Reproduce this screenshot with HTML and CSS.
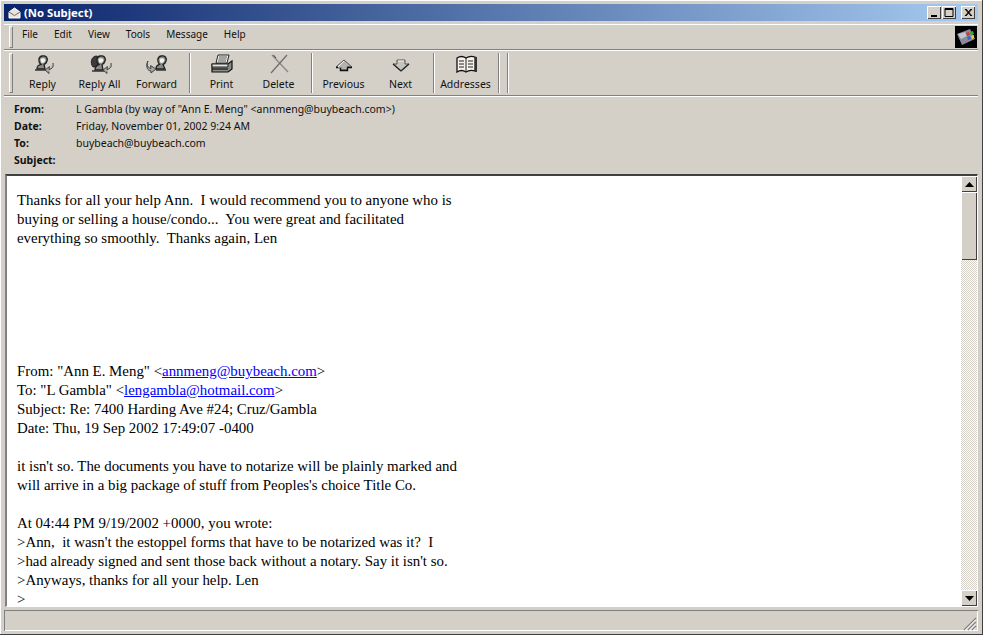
FILE: index.html
```html
<!DOCTYPE html>
<html lang="en">
<head>
    <meta charset="UTF-8">
    <meta name="viewport" content="width=device-width, initial-scale=1.0">
    <title>(No Subject)</title>
    <link rel="stylesheet" href="styles.css">
</head>
<body>
    <div class="window">
        <div class="titlebar">
            <svg class="title-icon" width="13" height="12" viewBox="0 0 13 12">
                <path d="M1 5 L6.5 1 L12 5 V11 H1 Z" fill="#e8e4d8" stroke="#fff" stroke-width="1"/>
                <path d="M1 5 L6.5 8.5 L12 5" fill="none" stroke="#6a6a6a" stroke-width="1"/>
            </svg>
            <span class="title-text">(No Subject)</span>
            <div class="caption-btns">
                <div class="caption-btn"><svg width="14" height="13" viewBox="0 0 14 13"><rect x="4" y="9" width="6" height="2" fill="#000"/></svg></div>
                <div class="caption-btn"><svg width="14" height="13" viewBox="0 0 14 13"><path d="M3 2.5 H11 V10.5 H3 Z M3 3.5 H11" fill="none" stroke="#000"/></svg></div>
                <div class="caption-btn close"><svg width="14" height="13" viewBox="0 0 14 13"><path d="M4 3 L10 10 M5 3 L11 10 M10 3 L4 10 M11 3 L5 10" stroke="#000" stroke-width="1"/></svg></div>
            </div>
        </div>

        <div class="menubar">
            <div class="grip"></div>
            <div class="menu-items">
                <span class="menu-item">File</span>
                <span class="menu-item">Edit</span>
                <span class="menu-item">View</span>
                <span class="menu-item">Tools</span>
                <span class="menu-item">Message</span>
                <span class="menu-item">Help</span>
            </div>
            <div class="throbber">
                <svg width="22" height="22" viewBox="0 0 22 22">
                    <rect width="22" height="22" fill="#000"/>
                    <path d="M2 8 L15 3 L20 13 L7 19 Z" fill="#8a8a9a"/>
                    <path d="M3 8 L10 6 L12 10 L6 13 Z" fill="#c4c4d0"/>
                    <path d="M11 7 L14 6 L15 9 L12 10 Z" fill="#d33"/>
                    <path d="M15 6 L18 5 L19 8 L16 9 Z" fill="#3a3"/>
                    <path d="M12 11 L15 10 L16 13 L13 14 Z" fill="#36c"/>
                    <path d="M16 10 L19 9 L19 12 L17 13 Z" fill="#ec3"/>
                </svg>
            </div>
        </div>

        <div class="toolbar">
            <div class="grip tall"></div>
            <div class="tool">
                <svg class="tool-icon" width="24" height="20" viewBox="0 0 24 20">
                    <path d="M6 15 C6 11 8 11 10 10.5 C7 8 7 3 11 2 C15 1 17 4 16 7 C15.5 9 14 10 13 10.5 L14 15 Z" fill="#8c8c88" stroke="#222" stroke-width="1.3"/>
                    <path d="M9.5 5 C11 3.5 14 4 14.5 6 C14 9 11 10 10 8 Z" fill="#f2f2ee"/>
                    <path d="M4 16 H16" stroke="#333" stroke-width="1.5"/>
                    <path d="M22 9 C23 13 21 15 18 15.5 L18.5 12.5 L14 16 L18 19.5 V17.5" fill="#a8a8a4" stroke="#444"/>
                </svg>
                <span class="tool-label">Reply</span>
            </div>
            <div class="tool">
                <svg class="tool-icon" width="24" height="20" viewBox="0 0 24 20">
                    <path d="M5 13 C2 9 3 3 8 2 L12 3 L10 12 Z" fill="#3c3c3a" stroke="#222"/>
                    <path d="M7 16 C7 12 9 11 11 10.5 C8 8 8 3 12 2 C16 1 18 4 17 7 C16.5 9 15 10 14 10.5 L15 16 Z" fill="#8c8c88" stroke="#222" stroke-width="1.3"/>
                    <path d="M10.5 5 C12 3.5 15 4 15.5 6 C15 9 12 10 11 8 Z" fill="#f2f2ee"/>
                    <path d="M4 17 H17" stroke="#333" stroke-width="1.5"/>
                    <path d="M23 9 C24 13 22 15 19 15.5 L19.5 12.5 L15 16 L19 19.5 V17.5" fill="#a8a8a4" stroke="#444"/>
                </svg>
                <span class="tool-label">Reply All</span>
            </div>
            <div class="tool">
                <svg class="tool-icon" width="24" height="20" viewBox="0 0 24 20">
                    <path d="M11 15 C11 11 13 11 14.5 10.5 C12 8 12 3 16 2 C20 1 22 4 21 7 C20.5 9 19 10 18 10.5 L20 15 Z" fill="#8c8c88" stroke="#222" stroke-width="1.3"/>
                    <path d="M14.5 5 C16 3.5 19 4 19.5 6 C19 9 16 10 15 8 Z" fill="#f2f2ee"/>
                    <path d="M11 16 H21" stroke="#333" stroke-width="1.5"/>
                    <path d="M3 7 C1 11 3 14 6 14.5 L5.5 11.5 L11 15 L6 19 V17 C3 17 0 13 3 7 Z" fill="#a8a8a4" stroke="#444"/>
                </svg>
                <span class="tool-label">Forward</span>
            </div>
            <div class="sep"></div>
            <div class="tool">
                <svg class="tool-icon" width="24" height="20" viewBox="0 0 24 20">
                    <path d="M8 1 H19 L17 9 H6 Z" fill="#f4f4f0" stroke="#222"/>
                    <path d="M9 3 H17 M8.5 5 H16.5 M8 7 H16" stroke="#555"/>
                    <path d="M2 10 H18 L22 7 V15 L18 18 H2 Z" fill="#8c8c88" stroke="#111" stroke-width="1.2"/>
                    <path d="M2 10 H18 V13 H2 Z" fill="#e4e4e0" stroke="#222"/>
                    <path d="M2 15 H18" stroke="#111" stroke-width="1.2"/>
                </svg>
                <span class="tool-label">Print</span>
            </div>
            <div class="tool">
                <svg class="tool-icon" width="24" height="20" viewBox="0 0 24 20">
                    <path d="M5 1 L21 18" stroke="#8a8a86" stroke-width="1.4"/>
                    <path d="M6.5 1 L9 4" stroke="#444" stroke-width="1"/>
                    <path d="M20 1 L4 19" stroke="#6c6c68" stroke-width="1.2"/>
                </svg>
                <span class="tool-label">Delete</span>
            </div>
            <div class="sep"></div>
            <div class="tool">
                <svg class="tool-icon" width="24" height="20" viewBox="0 0 24 20">
                    <path d="M12 6 L20 13 H15.5 V16 H8.5 V13 H4 Z" fill="#b4b4ae" stroke="#555"/>
                    <path d="M4 13.5 H8.5 V16.5 H15.5 V13.5 H20" fill="none" stroke="#111" stroke-width="1.4"/>
                    <path d="M12 7 L6 13 H9" fill="none" stroke="#f4f4f0"/>
                </svg>
                <span class="tool-label">Previous</span>
            </div>
            <div class="tool">
                <svg class="tool-icon" width="24" height="20" viewBox="0 0 24 20">
                    <path d="M12 17 L20 10 H16 V6 H8 V10 H4 Z" fill="#c4c4be" stroke="#555"/>
                    <path d="M4 10 L12 17 L20 10" fill="none" stroke="#222" stroke-width="1.3"/>
                    <path d="M9 7 H15" stroke="#f4f4f0"/>
                </svg>
                <span class="tool-label">Next</span>
            </div>
            <div class="sep"></div>
            <div class="tool">
                <svg class="tool-icon" width="24" height="20" viewBox="0 0 24 20">
                    <path d="M3 4 C6 2 9 2 12 4 C15 2 18 2 21 3 V17 C18 16 15 16 12 18 C9 16 6 16 3 18 Z" fill="#f4f2ea" stroke="#111" stroke-width="1.3"/>
                    <path d="M12 4 V18 M5 7 H10 M5 10 H10 M5 13 H10 M14 7 H19 M14 10 H19 M14 13 H19" stroke="#222"/>
                    <rect x="21" y="3" width="2" height="15" fill="#333"/>
                </svg>
                <span class="tool-label">Addresses</span>
            </div>
            <div class="sep"></div>
            <div class="sep last"></div>
        </div>

        <div class="headers">
            <div class="header-row"><span class="header-name">From:</span><span>L Gambla (by way of "Ann E. Meng" &lt;annmeng@buybeach.com&gt;)</span></div>
            <div class="header-row"><span class="header-name">Date:</span><span>Friday, November 01, 2002 9:24 AM</span></div>
            <div class="header-row"><span class="header-name">To:</span><span>buybeach@buybeach.com</span></div>
            <div class="header-row"><span class="header-name">Subject:</span><span></span></div>
        </div>

        <div class="message-frame">
            <div class="message">
                <p>Thanks for all your help Ann.&nbsp; I would recommend you to anyone who is<br>buying or selling a house/condo...&nbsp; You were great and facilitated<br>everything so smoothly.&nbsp; Thanks again, Len</p>
                <p class="quoted">From: "Ann E. Meng" &lt;<a href="#">annmeng@buybeach.com</a>&gt;<br>To: "L Gambla" &lt;<a href="#">lengambla@hotmail.com</a>&gt;<br>Subject: Re: 7400 Harding Ave #24; Cruz/Gambla<br>Date: Thu, 19 Sep 2002 17:49:07 -0400</p>
                <p>it isn't so. The documents you have to notarize will be plainly marked and<br>will arrive in a big package of stuff from Peoples's choice Title Co.</p>
                <p class="last-para">At 04:44 PM 9/19/2002 +0000, you wrote:<br>&gt;Ann,&nbsp; it wasn't the estoppel forms that have to be notarized was it?&nbsp; I<br>&gt;had already signed and sent those back without a notary. Say it isn't so.<br>&gt;Anyways, thanks for all your help. Len<br>&gt;</p>
            </div>
            <div class="scrollbar">
                <div class="scroll-btn"><svg width="9" height="5" viewBox="0 0 9 5"><path d="M4.5 0 L9 5 H0 Z" fill="#000"/></svg></div>
                <div class="scroll-track"><div class="scroll-thumb"></div></div>
                <div class="scroll-btn"><svg width="9" height="5" viewBox="0 0 9 5"><path d="M0 0 H9 L4.5 5 Z" fill="#000"/></svg></div>
            </div>
        </div>

        <div class="statusbar">
            <svg class="size-grip" width="14" height="14" viewBox="0 0 14 14">
                <path d="M13 1 L1 13 M13 5 L5 13 M13 9 L9 13" stroke="#808080" stroke-width="1.2"/>
                <path d="M13 2.5 L2.5 13 M13 6.5 L6.5 13 M13 10.5 L10.5 13" stroke="#fff"/>
            </svg>
        </div>
    </div>
</body>
</html>
```
FILE: styles.css
```css
html, body {
    margin: 0;
    padding: 0;
    height: 100%;
    overflow: hidden;
    background-color: #d4d0c8;
}
.window {
    box-sizing: border-box;
    width: 983px;
    height: 635px;
    padding: 4px 4px 3px 4px;
    display: flex;
    flex-direction: column;
    background-color: #d4d0c8;
    border-right: 1px solid #404040;
    border-bottom: 1px solid #404040;
    box-shadow: inset 1px 1px 0 #fff;
    font-family: "Noto Sans", "Liberation Sans", sans-serif;
    font-size: 10.5px;
    color: #111;
}

/* title bar */
.titlebar {
    height: 17px;
    flex: none;
    display: flex;
    align-items: center;
    padding: 0 3px 0 4px;
    background: linear-gradient(to right, #0a246a, #a6caf0);
}
.title-icon {
    margin-right: 3px;
}
.title-text {
    color: #fff;
    font-family: "Noto Sans", sans-serif;
    font-weight: bold;
    font-size: 11.3px;
}
.caption-btns {
    margin-left: auto;
    display: flex;
}
.caption-btn {
    width: 14px;
    height: 13px;
    margin-left: 1px;
    background-color: #d4d0c8;
    border: 0 solid;
    box-shadow: inset 1px 1px 0 #fff, inset -1px -1px 0 #404040;
}
.caption-btn svg {
    display: block;
}
.caption-btn.close {
    margin-left: 5px;
}

/* bars */
.menubar {
    height: 24px;
    margin-top: 3px;
    flex: none;
    display: flex;
    align-items: center;
    padding-left: 5px;
    border-top: 1px solid #fff;
    border-bottom: 1px solid #808080;
    box-shadow: 0 1px 0 #fff;
}
.grip {
    width: 2px;
    height: 20px;
    flex: none;
    background-color: #d4d0c8;
    border-left: 1px solid #fff;
    border-top: 1px solid #fff;
    border-right: 1px solid #808080;
    border-bottom: 1px solid #808080;
}
.grip.tall {
    height: 38px;
}
.menu-items {
    display: flex;
    margin-left: 1px;
    padding-bottom: 7px;
    font-size: 10px;
}
.menu-item {
    padding: 0 8px;
}
.throbber {
    margin-left: auto;
    margin-right: 1px;
    height: 22px;
}
.throbber svg {
    display: block;
}
.toolbar {
    height: 44px;
    margin-top: 1px;
    flex: none;
    display: flex;
    align-items: center;
    padding-left: 5px;
    border-bottom: 1px solid #808080;
    box-shadow: 0 1px 0 #fff;
}
.toolbar .grip {
    margin-right: 1px;
}
.tool {
    width: 57px;
    height: 44px;
    flex: none;
    display: flex;
    flex-direction: column;
    align-items: center;
}
.tool-icon {
    margin-top: 3px;
}
.tool-label {
    margin-top: 3px;
    white-space: nowrap;
}
.sep {
    width: 0;
    height: 40px;
    flex: none;
    margin: 0 2px 0 4px;
    border-left: 1px solid #808080;
    border-right: 1px solid #fff;
}
.sep.last {
    margin-left: 5px;
}

/* message headers */
.headers {
    flex: none;
    height: 78px;
    padding: 5px 0 0 10px;
    box-sizing: border-box;
}
.header-row {
    height: 17px;
    line-height: 17px;
    display: flex;
}
.header-name {
    width: 62px;
    flex: none;
    font-weight: bold;
}

/* message body */
.message-frame {
    flex: 1;
    min-height: 0;
    margin: 0 0 0 1px;
    display: flex;
    background-color: #fff;
    border-top: 2px solid #404040;
    border-left: 2px solid #808080;
    border-right: 1px solid #fff;
    border-bottom: 1px solid #fff;
}
.message {
    flex: 1;
    min-width: 0;
    padding: 15px 0 0 10px;
    font-family: "Liberation Serif", serif;
    font-size: 14.9px;
    line-height: 19px;
    color: #000;
    white-space: nowrap;
}
.message p {
    margin: 0 0 19px 0;
}
.message p.quoted {
    margin-top: 114px;
}
.message p.last-para {
    margin-bottom: 0;
}
.message a {
    color: #0000ff;
}
.scrollbar {
    width: 16px;
    flex: none;
    display: flex;
    flex-direction: column;
}
.scroll-btn {
    height: 16px;
    flex: none;
    display: flex;
    align-items: center;
    justify-content: center;
    background-color: #d4d0c8;
    box-shadow: inset 1px 1px 0 #fff, inset -1px -1px 0 #404040;
}
.scroll-track {
    flex: 1;
    background-color: #fff;
    background-image: repeating-conic-gradient(#d4d0c8 0 25%, #fff 0 50%);
    background-size: 2px 2px;
}
.scroll-thumb {
    height: 68px;
    background-color: #d4d0c8;
    box-shadow: inset 1px 1px 0 #fff, inset -1px -1px 0 #404040;
}

/* status bar */
.statusbar {
    flex: 1;
    max-height: 21px;
    min-height: 21px;
    margin-top: 3px;
    box-sizing: border-box;
    display: flex;
    justify-content: flex-end;
    align-items: flex-end;
    border-top: 1px solid #808080;
    border-left: 1px solid #808080;
    box-shadow: inset -1px -1px 0 #fff;
}
.size-grip {
    display: block;
    margin-right: 1px;
}
```
